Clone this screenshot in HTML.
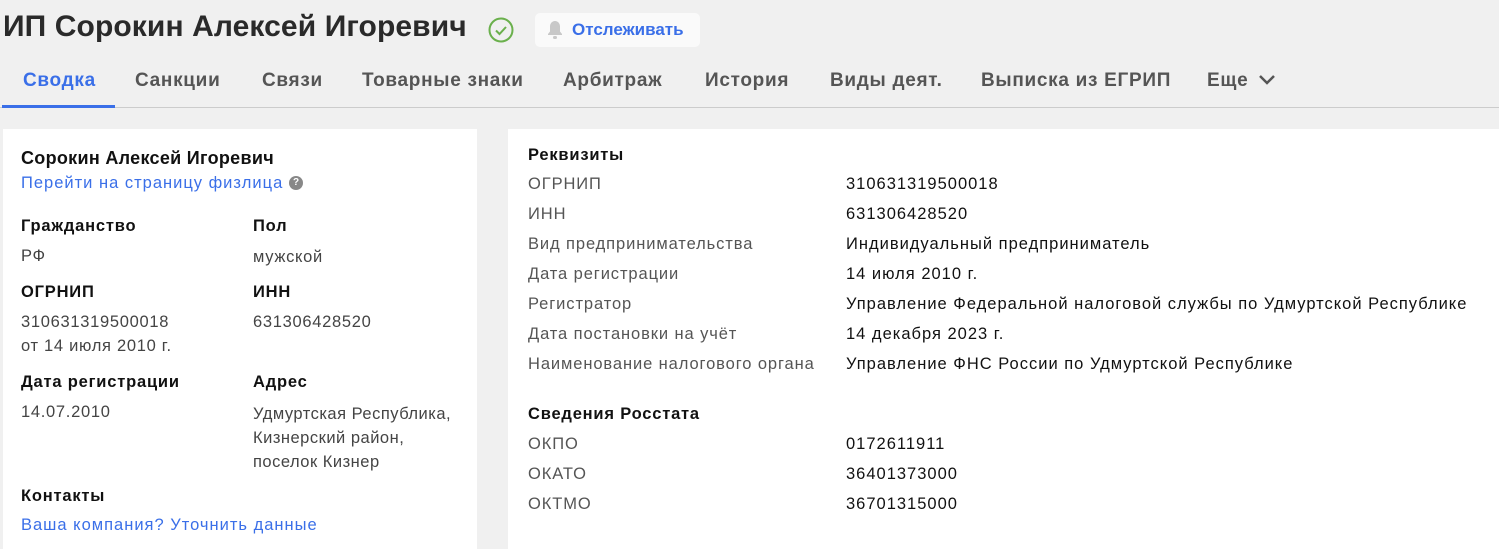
<!DOCTYPE html>
<html><head><meta charset="utf-8"><style>
*{margin:0;padding:0;box-sizing:border-box}
body{width:1499px;height:537px;overflow:hidden;background:#f0f0f0;font-family:"Liberation Sans",sans-serif;position:relative;color:#1a1a1a}
.a{position:absolute;white-space:nowrap}
h1{position:absolute;left:3px;top:10px;font-size:30px;font-weight:bold;color:#2a2a2a;letter-spacing:0.1px}
.tab{position:absolute;top:70px;font-size:19px;font-weight:bold;color:#555;letter-spacing:0.7px}
.card{position:absolute;background:#fff;top:129px;height:420px}
.b{font-weight:bold;font-size:16.5px;color:#111;letter-spacing:0.8px}
.v{font-size:16.5px;color:#444;letter-spacing:0.7px}
.l{font-size:16.5px;color:#555;letter-spacing:0.9px}
.d{font-size:16.5px;color:#111;letter-spacing:1px}
.lnk{font-size:16.5px;color:#3a6fe8;letter-spacing:1px}
</style></head><body>
<h1>ИП Сорокин Алексей Игоревич</h1>
<svg class="a" style="left:487px;top:16px" width="28" height="28" viewBox="0 0 28 28"><circle cx="14" cy="14" r="11.5" fill="none" stroke="#6ab04c" stroke-width="2"/><path d="M9 14.5l3.5 3.5 6.5-7" fill="none" stroke="#6ab04c" stroke-width="2"/></svg>
<div class="a" style="left:535px;top:13px;width:165px;height:34px;background:#fafafa;border-radius:5px"></div>
<svg class="a" style="left:546px;top:20px" width="18" height="20" viewBox="0 0 18 20"><path d="M9 1c-3 0-5 2.5-5 5.5v5L2 14v1h14v-1l-2-2.5v-5C14 3.5 12 1 9 1z" fill="#c8c8c8"/><rect x="7" y="16" width="4" height="3" rx="1.5" fill="#c8c8c8"/></svg>
<div class="a" style="left:572px;top:20px;font-size:17px;font-weight:bold;color:#3a6fe8">Отслеживать</div>
<div class="tab" style="left:23px;color:#3a6fe8">Сводка</div>
<div class="tab" style="left:135px">Санкции</div>
<div class="tab" style="left:262px">Связи</div>
<div class="tab" style="left:362px">Товарные знаки</div>
<div class="tab" style="left:563px">Арбитраж</div>
<div class="tab" style="left:705px">История</div>
<div class="tab" style="left:830px">Виды деят.</div>
<div class="tab" style="left:981px">Выписка из ЕГРИП</div>
<div class="tab" style="left:1207px">Еще</div>
<svg class="a" style="left:1258px;top:74px" width="18" height="12" viewBox="0 0 18 12"><path d="M2 2l7 7 7-7" fill="none" stroke="#555" stroke-width="2.5"/></svg>
<div class="a" style="left:0;top:107px;width:1499px;height:1px;background:#ccc"></div>
<div class="a" style="left:2px;top:105px;width:113px;height:3px;background:#3a6fe8"></div>

<div class="card" style="left:3px;width:474px"></div>
<div class="card" style="left:508px;width:991px"></div>

<div class="a b" style="left:21px;top:148px;font-size:18px;letter-spacing:0.3px">Сорокин Алексей Игоревич</div>
<div class="a lnk" style="left:21px;top:174px">Перейти на страницу физлица</div>
<div class="a" style="left:289px;top:176px;width:14px;height:14px;border-radius:50%;background:#888;color:#fff;font-size:10px;font-weight:bold;text-align:center;line-height:14px">?</div>
<div class="a b" style="left:21px;top:217px">Гражданство</div>
<div class="a b" style="left:253px;top:217px">Пол</div>
<div class="a v" style="left:21px;top:247px">РФ</div>
<div class="a v" style="left:253px;top:248px">мужской</div>
<div class="a b" style="left:21px;top:283px">ОГРНИП</div>
<div class="a b" style="left:253px;top:283px">ИНН</div>
<div class="a v" style="left:21px;top:313px">310631319500018</div>
<div class="a v" style="left:253px;top:313px">631306428520</div>
<div class="a v" style="left:21px;top:337px">от 14 июля 2010 г.</div>
<div class="a b" style="left:21px;top:373px">Дата регистрации</div>
<div class="a b" style="left:253px;top:373px">Адрес</div>
<div class="a v" style="left:21px;top:403px">14.07.2010</div>
<div class="a v" style="left:253px;top:402px;line-height:24px;letter-spacing:0.5px">Удмуртская Республика,<br>Кизнерский район,<br>поселок Кизнер</div>
<div class="a b" style="left:21px;top:487px">Контакты</div>
<div class="a lnk" style="left:21px;top:516px">Ваша компания? Уточнить данные</div>

<div class="a b" style="left:528px;top:146px">Реквизиты</div>
<div class="a l" style="left:528px;top:169px;line-height:30px">ОГРНИП<br>ИНН<br>Вид предпринимательства<br>Дата регистрации<br>Регистратор<br>Дата постановки на учёт<br>Наименование налогового органа</div>
<div class="a d" style="left:846px;top:169px;line-height:30px">310631319500018<br>631306428520<br>Индивидуальный предприниматель<br>14 июля 2010 г.<br>Управление Федеральной налоговой службы по Удмуртской Республике<br>14 декабря 2023 г.<br>Управление ФНС России по Удмуртской Республике</div>
<div class="a b" style="left:528px;top:405px">Сведения Росстата</div>
<div class="a l" style="left:528px;top:429px;line-height:30px">ОКПО<br>ОКАТО<br>ОКТМО</div>
<div class="a d" style="left:846px;top:429px;line-height:30px">0172611911<br>36401373000<br>36701315000</div>
</body></html>
